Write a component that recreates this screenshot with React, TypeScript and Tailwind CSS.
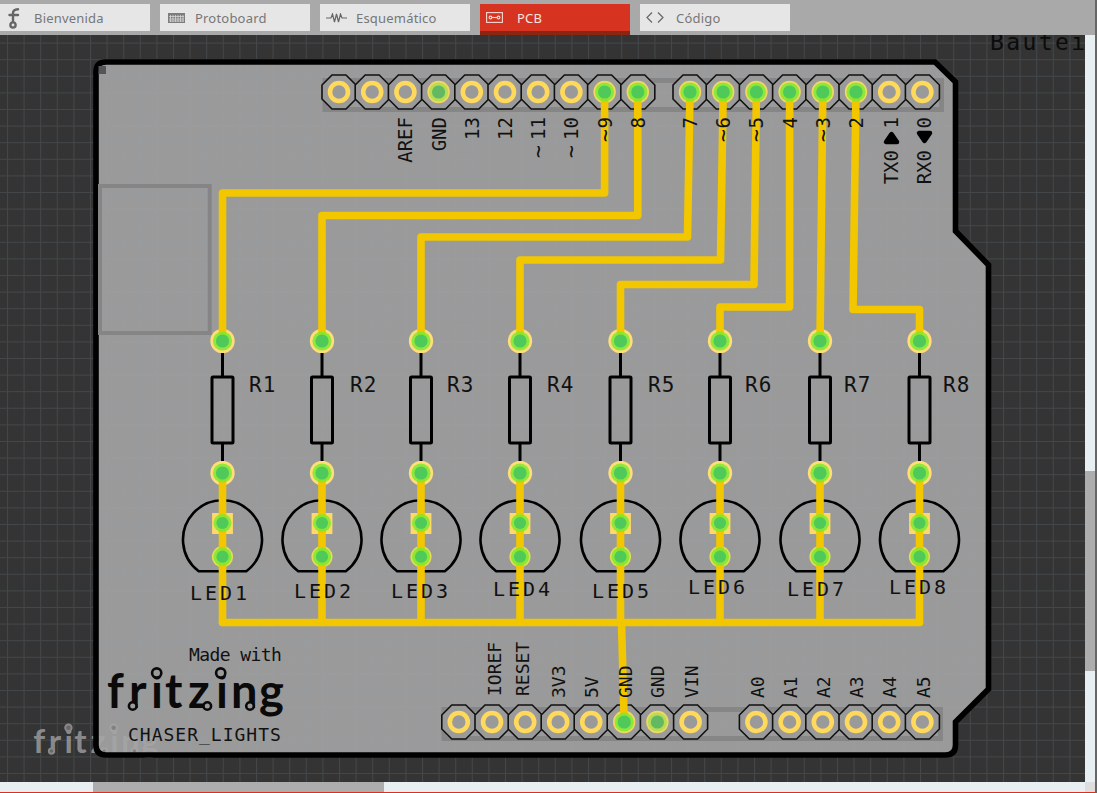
import React from "react";

const MONO = "'DejaVu Sans Mono', 'Liberation Mono', monospace";
const TOPL = [339, 372.2, 405.4, 438.6, 471.8, 505, 538.2, 571.4, 604.6, 637.8];
const TOPR = [690, 723.2, 756.4, 789.6, 822.8, 856, 889.2, 922.4];
const BOTL = [458.8, 492, 525.2, 558.2, 591.2, 624.2, 657.4, 690.6];
const BOTR = [756.4, 789.6, 822.8, 856, 889.2, 922.4];
const COLS = [222.5, 322, 421, 520, 620.5, 720, 820, 919.5];

const TRACES = [
  "M604.6 92 V193 H222.5 V341",
  "M637.8 92 V215.5 H322 V341",
  "M690 92 L687.5 237 H421 V341",
  "M723.2 92 L720.5 260 H520 V341",
  "M756.4 92 L754 284.5 H620.5 V341",
  "M789.6 92 V307 H720 V341",
  "M822.8 92 L820 341",
  "M856 92 L853 309.5 H919.5 V341",
  "M222.5 622.5 H919.5",
  "M621.5 622.5 L624.2 722",
  ...COLS.map((x) => `M${x} 473 V622.5`),
];

const LED_LABELS = [
  [190, 600], [294, 598], [391, 598], [493, 596], [592, 598], [688, 594], [787, 596], [889, 594],
];
const R_LABELS = [249, 350, 447, 547, 648, 745, 844, 943];

function Octagon({ x, y }: { x: number; y: number }) {
  const a = 17, b = 7;
  return (
    <polygon
      points={`${x - a},${y - b} ${x - b},${y - a} ${x + b},${y - a} ${x + a},${y - b} ${x + a},${y + b} ${x + b},${y + a} ${x - b},${y + a} ${x - a},${y + b}`}
      fill="#9a9a9a"
      stroke="#111"
      strokeWidth="1.6"
    />
  );
}

function RingPad({ x, y }: { x: number; y: number }) {
  return <circle cx={x} cy={y} r="9" fill="none" stroke="#ffd95c" strokeWidth="4.6" />;
}

function GreenPad({ x, y, r = 11, muted = false }: { x: number; y: number; r?: number; muted?: boolean }) {
  return (
    <g>
      <circle cx={x} cy={y} r={r - 1.4} fill={muted ? "#a9de50" : "#79ea30"} fillOpacity="0.82" />
      <circle cx={x} cy={y} r={r - 4.4} fill={muted ? "#63b863" : "#4fc95a"} />
    </g>
  );
}

function VText({ x, y, t, anchor = "end", size = 19 }: { x: number; y: number; t: string; anchor?: "end" | "start"; size?: number }) {
  return (
    <text transform={`translate(${x + 7} ${y}) rotate(-90)`} textAnchor={anchor} fontSize={size} fill="#111">
      {t}
    </text>
  );
}

function Logo({ x, y, k, fill, dot }: { x: number; y: number; k: number; fill: string; dot: string }) {
  const glyphX = [-1, 21, 43, 57, 80, 108, 123, 151].map((d) => x + d * k).join(" ");
  return (
    <g>
      <text x={glyphX} y={y} fontFamily="Lato, sans-serif" fontWeight="700" fontSize={47 * k} fill={fill}>
        fritzing
      </text>
      {[[48.7, -35], [112.7, -35]].map(([dx, dy], i) => (
        <circle key={i} cx={x + dx * k} cy={y + dy * k} r={4.6 * k} fill={dot} stroke={fill} strokeWidth={2.6 * k} />
      ))}
      {[[24.7, -2], [99.3, -2], [142, -2]].map(([dx, dy], i) => (
        <circle key={i} cx={x + dx * k} cy={y + dy * k} r={3.8 * k} fill={dot} stroke={fill} strokeWidth={2.6 * k} />
      ))}
    </g>
  );
}

function Board() {
  const outline =
    "M106 62 H935 L955.5 82 V231 L988.5 265 V689 L955.5 722 V745 Q955.5 755 945.5 755 H106 Q96 755 96 745 V72 Q96 62 106 62 Z";
  return (
    <svg width="1085" height="747" viewBox="0 35 1085 747" className="block" fontFamily={MONO}>
      <defs>
        <pattern id="grid" x="7" y="9.4" width="16.6" height="16.6" patternUnits="userSpaceOnUse">
          <path d="M0.5 0 V16.6 M0 0.5 H16.6" stroke="#8fa4b8" strokeOpacity="0.17" strokeWidth="1" fill="none" />
        </pattern>
      </defs>
      <rect x="0" y="35" width="1085" height="747" fill="#343434" />
      <path d={outline} fill="#9a9a9a" />
      <rect x="0" y="35" width="1085" height="747" fill="url(#grid)" />
      <text x="990" y="50" fontSize="23" letterSpacing="2.4" fill="#0c0c0c">Bauteil</text>
      <g opacity="0.75">
        <Logo x={34} y={752.5} k={0.707} fill="#a6a6a6" dot="#7a7a7a" />
      </g>
      <path d={outline} fill="none" stroke="#000" strokeWidth="5.6" strokeLinejoin="miter" />
      <path d="M98.5 66 H106 V74 H98.5 Z" fill="#555" />

      <rect x="100" y="186" width="109.7" height="147" fill="none" stroke="#858585" strokeWidth="4" />
      <rect x="325" y="80.5" width="616.5" height="29" fill="none" stroke="#868686" strokeWidth="5" />
      <rect x="444" y="709.5" width="496.5" height="29" fill="none" stroke="#868686" strokeWidth="5" />

      {[...TOPL, ...TOPR].map((x) => <Octagon key={x} x={x} y={92} />)}
      {[...BOTL, ...BOTR].map((x) => <Octagon key={x} x={x} y={722} />)}
      {[339, 372.2, 405.4, 471.8, 505, 538.2, 571.4, 889.2, 922.4].map((x) => <RingPad key={x} x={x} y={92} />)}
      {[458.8, 492, 525.2, 558.2, 591.2, 690.6, ...BOTR].map((x) => <RingPad key={x} x={x} y={722} />)}
      {[604.6, 637.8, 690, 723.2, 756.4, 789.6, 822.8, 856, 438.6].map((x) => (
        <circle key={x} cx={x} cy={92} r="11.2" fill="#f2d860" />
      ))}
      {[624.2, 657.4].map((x) => <circle key={x} cx={x} cy={722} r="11.2" fill="#f2d860" />)}

      {COLS.map((x) => (
        <g key={x}>
          <circle cx={x} cy={341} r="12.2" fill="#ffdd78" />
          <circle cx={x} cy={473} r="12.2" fill="#ffdd78" />
          <rect x={x - 10.4} y={513} width="20.8" height="21" fill="#ffd966" />
          <circle cx={x} cy={556.7} r="10.6" fill="#e6de55" />
          <path d={`M${x} 353 V377 M${x} 443 V461`} stroke="#000" strokeWidth="3" fill="none" />
          <rect x={x - 10.5} y={377} width="21" height="66" rx="1" fill="none" stroke="#000" strokeWidth="3" />
          <path d={`M${x - 23.8} 571.3 A39.5 39.5 0 1 1 ${x + 23.8} 571.3 Z`} fill="none" stroke="#000" strokeWidth="2.6" />
        </g>
      ))}

      <g fill="none" stroke="#f2c700" strokeWidth="7.6" strokeLinejoin="round" strokeLinecap="round">
        {TRACES.map((d) => <path key={d} d={d} />)}
      </g>

      {[604.6, 637.8, 690, 723.2, 756.4, 789.6, 822.8, 856].map((x) => <GreenPad key={x} x={x} y={92} />)}
      <GreenPad x={438.6} y={92} muted />
      <GreenPad x={624.2} y={722} />
      <GreenPad x={657.4} y={722} muted />
      {COLS.map((x) => (
        <g key={x}>
          <GreenPad x={x} y={341} r={11} />
          <GreenPad x={x} y={473} r={11} />
          <GreenPad x={x} y={523} r={10.5} />
          <GreenPad x={x} y={556.7} r={10.5} />
        </g>
      ))}

      {R_LABELS.map((x, i) => (
        <text key={x} x={x} y={392} fontSize="21" letterSpacing="1" fill="#111">{`R${i + 1}`}</text>
      ))}
      {LED_LABELS.map(([x, y], i) => (
        <text key={x} x={x} y={y} fontSize="20" letterSpacing="3" fill="#111">{`LED${i + 1}`}</text>
      ))}

      <VText x={405.4} y={117} t="AREF" />
      <VText x={438.6} y={117} t="GND" />
      <VText x={471.8} y={117} t="13" />
      <VText x={505} y={117} t="12" />
      <VText x={538.2} y={117} t="11" />
      <VText x={538.2} y={145} t="~" size={22} />
      <VText x={571.4} y={117} t="10" />
      <VText x={571.4} y={145} t="~" size={22} />
      <VText x={604.6} y={117} t="9" />
      <VText x={604.6} y={129} t="~" size={22} />
      <VText x={637.8} y={117} t="8" />
      <VText x={690} y={117} t="7" />
      <VText x={723.2} y={117} t="6" />
      <VText x={723.2} y={129} t="~" size={22} />
      <VText x={756.4} y={117} t="5" />
      <VText x={756.4} y={129} t="~" size={22} />
      <VText x={789.6} y={117} t="4" />
      <VText x={822.8} y={117} t="3" />
      <VText x={822.8} y={129} t="~" size={22} />
      <VText x={856} y={117} t="2" />
      <VText x={890.5} y={117} t="1" />
      <VText x={890.5} y={150} t="TX0" />
      <VText x={924} y={117} t="0" />
      <VText x={924} y={150} t="RX0" />
      <path d="M891.5 134 L886 142 H897 Z" fill="#000" stroke="#000" strokeWidth="4.5" strokeLinejoin="round" />
      <path d="M924.5 141 L919 133 H930 Z" fill="#000" stroke="#000" strokeWidth="4.5" strokeLinejoin="round" />

      {([
        [494, 696, "IOREF"], [522, 696, "RESET"], [558, 698, "3V3"], [591, 698, "5V"], [625, 698, "GND"],
        [657, 698, "GND"], [691, 698, "VIN"], [757, 698, "A0"], [790, 698, "A1"], [823, 698, "A2"],
        [856, 698, "A3"], [889, 698, "A4"], [923, 698, "A5"],
      ] as [number, number, string][]).map(([x, y, t]) => (
        <VText key={x} x={x} y={y} t={t} anchor="start" size={18} />
      ))}

      <text x="189" y="661" fontSize="18" letterSpacing="-0.6" fill="#111">Made with</text>
      <Logo x={108} y={708} k={1} fill="#0a0a0a" dot="#9a9a9a" />
      <text x="128" y="741" fontSize="18" letterSpacing="1" fill="#111">CHASER_LIGHTS</text>
    </svg>
  );
}

function FIcon() {
  return (
    <svg width="12" height="22" viewBox="0 0 12 22" className="ml-[2px]" fill="none" stroke="#666" strokeWidth="2.4" strokeLinecap="round">
      <path d="M5 15 V6 Q5 2.5 10 2.2 M1.5 8 H10" />
      <circle cx="5" cy="18" r="2.6" />
    </svg>
  );
}

function BoardIcon() {
  return (
    <svg width="17" height="10" viewBox="0 0 17 10" className="ml-[2px]">
      <rect width="17" height="10" fill="#7d7d7d" />
      <path d="M2.5 2 V9 M5 2 V9 M7.5 2 V9 M10 2 V9 M12.5 2 V9 M15 2 V9 M1 3.5 H16 M1 6 H16 M1 8 H16" stroke="#d6d6d6" strokeWidth="0.8" />
    </svg>
  );
}

function SchemIcon() {
  return (
    <svg width="21" height="10" viewBox="0 0 21 10" fill="none" stroke="#666" strokeWidth="1.2">
      <path d="M0 5 H5 L6.5 1 L8.5 9 L10.5 1 L12.5 9 L14.5 1 L16 5 H21" />
    </svg>
  );
}

function PcbIcon() {
  return (
    <svg width="17" height="11" viewBox="0 0 17 11" fill="none" stroke="#f6d9d2" strokeWidth="1.1">
      <rect x="0.6" y="0.6" width="15.8" height="9.8" />
      <circle cx="4.5" cy="5.5" r="1.4" />
      <circle cx="12.5" cy="5.5" r="1.4" />
      <path d="M6 5.5 H11" />
    </svg>
  );
}

function CodeIcon() {
  return (
    <svg width="18" height="11" viewBox="0 0 18 11" fill="none" stroke="#666" strokeWidth="1.2">
      <path d="M6 0.5 L1 5.5 L6 10.5 M12 0.5 L17 5.5 L12 10.5" />
    </svg>
  );
}

function Tab({ label, icon, active = false, offset = "w-[36px]" }: { label: string; icon: React.ReactNode; active?: boolean; offset?: string }) {
  return (
    <div className={active ? "w-[150px] h-[31px] bg-[#d63420] border-b-4 border-[#8c2412] flex items-center text-[#f7e4df]" : "w-[150px] h-[27px] bg-[#e6e6e6] flex items-center text-[#767676]"}>
      <div className={`${offset} pl-[6px] shrink-0 flex items-center`}>{icon}</div>
      <span className="text-[13px] tracking-[0.2px] pt-[2px]">{label}</span>
    </div>
  );
}

export default function App() {
  return (
    <div className="w-[1097px] h-[793px] flex overflow-hidden font-['Noto_Sans',sans-serif]">
      <div className="w-[1095px] flex flex-col">
        <div className="h-[35px] bg-[#a9a9a9] pt-1 flex items-start gap-[10px]">
          <Tab label="Bienvenida" icon={<FIcon />} offset="w-[34px]" />
          <Tab label="Protoboard" icon={<BoardIcon />} offset="w-[35px]" />
          <Tab label="Esquemático" icon={<SchemIcon />} />
          <Tab label="PCB" icon={<PcbIcon />} active offset="w-[37px]" />
          <Tab label="Código" icon={<CodeIcon />} />
        </div>
        <div className="h-[747px] flex">
          <div className="w-[1085px] overflow-hidden">
            <Board />
          </div>
          <div className="w-[10px] bg-[#e8eff2]">
            <div className="mt-[436px] h-[200px] bg-[#adadad]" />
          </div>
        </div>
        <div className="h-[10px] flex">
          <div className="w-[1085px] bg-[#e8eff2]">
            <div className="ml-[93px] w-[291px] h-[10px] bg-[#adadad]" />
          </div>
          <div className="w-[10px] bg-[#dddddd]" />
        </div>
        <div className="h-px bg-[#d9301f]" />
      </div>
      <div className="w-[2px] bg-[#666666]" />
    </div>
  );
}
